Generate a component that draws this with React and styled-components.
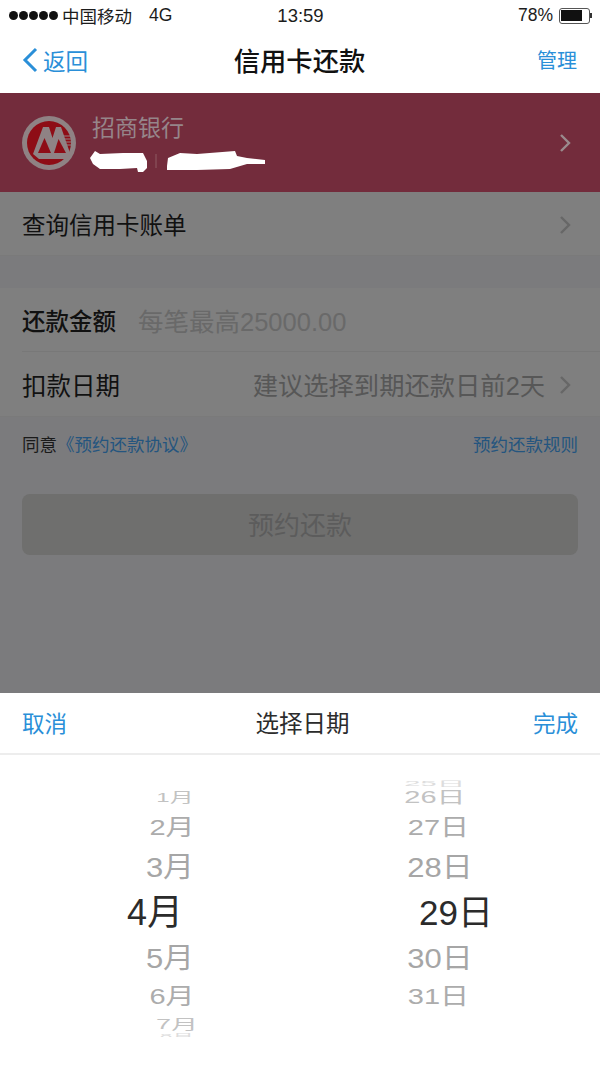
import styled, { createGlobalStyle } from "styled-components";

const months = [
  { label: "1月", size: 24, height: 18, squash: 0.55, color: "#c2c2c2", shift: -10 },
  { label: "2月", size: 29, height: 40, squash: 0.78, color: "#acacac", shift: -4 },
  { label: "3月", size: 31, height: 38, squash: 0.92, color: "#a6a6a6", shift: 0 },
  { label: "4月", size: 36, height: 52, squash: 1, color: "#2b2b2b", shift: 30 },
  { label: "5月", size: 31, height: 40, squash: 0.92, color: "#a6a6a6", shift: 0 },
  { label: "6月", size: 29, height: 38, squash: 0.78, color: "#acacac", shift: -4 },
  { label: "7月", size: 27, height: 20, squash: 0.52, color: "#c2c2c2", shift: -14 },
  { label: "8月", size: 22, height: 4, squash: 0.25, color: "#dddddd", shift: -14 },
];

const days = [
  { label: "25日", size: 29, height: 8, squash: 0.25, color: "#dddddd", shift: 10 },
  { label: "26日", size: 29, height: 18, squash: 0.55, color: "#c2c2c2", shift: 10 },
  { label: "27日", size: 29, height: 40, squash: 0.78, color: "#acacac", shift: 3 },
  { label: "28日", size: 31, height: 38, squash: 0.92, color: "#a6a6a6", shift: 0 },
  { label: "29日", size: 35, height: 52, squash: 1, color: "#2b2b2b", shift: -32 },
  { label: "30日", size: 31, height: 40, squash: 0.92, color: "#a6a6a6", shift: 0 },
  { label: "31日", size: 29, height: 38, squash: 0.78, color: "#acacac", shift: 3 },
];

function Chevron({ color, drop = 0 }) {
  return (
    <ChevronIcon $drop={drop} width="14" height="20" viewBox="0 0 14 20" fill="none">
      <path d="M3 2l8 8-8 8" stroke={color} strokeWidth="2.400" />
    </ChevronIcon>
  );
}

function BankLogo() {
  return (
    <svg width="56" height="56" viewBox="0 0 56 56">
      <circle cx="28" cy="28" r="27" fill="#8f8284" />
      <circle cx="28" cy="28" r="22" fill="#8e0d16" />
      <path d="M12 39L22 12H28L31.500 23 35 12H40L49 38 46 44H18z" fill="#8f8284" />
      <path d="M17 38L23.500 23 30 38z" fill="#8e0d16" />
      <path d="M33 38L37.500 24 45 38z" fill="#8e0d16" />
      <path d="M42 21h8M43 24h8M44 27h7M45 30h6" stroke="#8f8284" strokeWidth="1.200" />
    </svg>
  );
}

function Redaction() {
  return (
    <RedactionIcon width="180" height="24" viewBox="0 0 180 24">
      <path
        d="M2 9L7 2 12 5 35 4 55 4 59 12 59 19 55 23 50 23 49 19 32 20 12 20 5 15z"
        fill="#fff"
      />
      <path d="M68 5v14" stroke="#8f5a62" strokeWidth="1" />
      <path
        d="M79 17L80 9 92 4 109 5 147 2 149 7 159 9 177 11 177 15 159 15 142 20 109 21 79 21z"
        fill="#fff"
      />
    </RedactionIcon>
  );
}

function WheelColumn({ items, top, width }) {
  return (
    <Wheel $width={width} $top={top}>
      {items.map((item) => (
        <WheelItem
          key={item.label}
          $size={item.size}
          $height={item.height}
          $squash={item.squash}
          $color={item.color}
          $shift={item.shift}
        >
          <span>{item.label}</span>
        </WheelItem>
      ))}
    </Wheel>
  );
}

function App() {
  return (
    <Screen>
      <GlobalStyle />
      <StatusBar>
        <Carrier>
          <Signal>
            <i />
            <i />
            <i />
            <i />
            <i />
          </Signal>
          中国移动
          <Network>4G</Network>
        </Carrier>
        <Clock>13:59</Clock>
        <BatteryWrap>
          78%
          <Battery>
            <BatteryFill />
          </Battery>
          <BatteryTip />
        </BatteryWrap>
      </StatusBar>
      <NavBar>
        <BackLink>
          <svg width="16" height="26" viewBox="0 0 16 26" fill="none">
            <path d="M14 2L3 13l11 11" stroke="#2a8fd8" strokeWidth="3" />
          </svg>
          返回
        </BackLink>
        <NavTitle>信用卡还款</NavTitle>
        <NavAction>管理</NavAction>
      </NavBar>
      <Dimmed>
        <BankBanner>
          <BankLeft>
            <BankLogo />
            <BankInfo>
              <BankName>招商银行</BankName>
              <Redaction />
            </BankInfo>
          </BankLeft>
          <Chevron color="#9a8a8d" />
        </BankBanner>
        <RowGroup>
          <Row $height={64}>
            <RowLabel>查询信用卡账单</RowLabel>
            <Chevron color="#676767" drop={3} />
          </Row>
        </RowGroup>
        <Gap />
        <RowGroup>
          <InsetRow $height={64}>
            <RowLabel $strong>还款金额</RowLabel>
            <Placeholder>每笔最高25000.00</Placeholder>
          </InsetRow>
          <Row $height={65}>
            <RowLabel $wide>扣款日期</RowLabel>
            <RowValue>
              <HintText>建议选择到期还款日前2天</HintText>
              <Chevron color="#676767" drop={1} />
            </RowValue>
          </Row>
        </RowGroup>
        <AgreementRow>
          <span>
            同意
            <DimLink>《预约还款协议》</DimLink>
          </span>
          <DimLink>预约还款规则</DimLink>
        </AgreementRow>
        <SubmitButton>预约还款</SubmitButton>
      </Dimmed>
      <Sheet>
        <SheetHeader>
          <SheetAction>取消</SheetAction>
          <SheetTitle>选择日期</SheetTitle>
          <SheetAction>完成</SheetAction>
        </SheetHeader>
        <Wheels>
          <WheelColumn items={months} top={8} width={110} />
          <WheelColumn items={days} top={0} width={110} />
        </Wheels>
      </Sheet>
    </Screen>
  );
}

export default App;

const GlobalStyle = createGlobalStyle`
  html, body {
    margin: 0;
    padding: 0;
    background: #fff;
  }
  * {
    box-sizing: border-box;
  }
`;

const Screen = styled.div`
  width: 600px;
  height: 1067px;
  overflow: hidden;
  display: flex;
  flex-direction: column;
  font-family: "Liberation Sans", "Noto Sans CJK SC", sans-serif;
`;

const StatusBar = styled.div`
  height: 33px;
  padding: 0 8px 2px 9px;
  display: flex;
  align-items: center;
  justify-content: space-between;
  font-size: 17.500px;
  color: #1c1c1c;
`;

const Carrier = styled.div`
  width: 200px;
  display: flex;
  align-items: center;
`;

const Signal = styled.div`
  display: flex;
  gap: 1px;
  margin-right: 4px;

  i {
    width: 9px;
    height: 9px;
    border-radius: 50%;
    background: #111;
  }
`;

const Network = styled.span`
  margin-left: 17px;
`;

const Clock = styled.div`
  font-size: 18.500px;
`;

const BatteryWrap = styled.div`
  width: 200px;
  display: flex;
  align-items: center;
  justify-content: flex-end;
`;

const Battery = styled.div`
  width: 31px;
  height: 16px;
  margin-left: 6px;
  padding: 1.500px;
  border: 1px solid #555;
  border-radius: 3px;
`;

const BatteryFill = styled.div`
  width: 80%;
  height: 100%;
  background: #111;
`;

const BatteryTip = styled.div`
  width: 2px;
  height: 5px;
  background: #333;
`;

const NavBar = styled.div`
  height: 60px;
  padding: 0 23px 7px 22px;
  display: flex;
  align-items: center;
  justify-content: space-between;
`;

const BackLink = styled.div`
  width: 120px;
  display: flex;
  align-items: center;
  gap: 5px;
  font-size: 22.500px;
  color: #2a8fd8;
`;

const NavTitle = styled.div`
  font-size: 26.300px;
  font-weight: 500;
  color: #111;
`;

const NavAction = styled.div`
  width: 120px;
  text-align: right;
  font-size: 20px;
  color: #2a8fd8;
`;

const Dimmed = styled.div`
  height: 600px;
  background: #7b7b7d;
`;

const BankBanner = styled.div`
  height: 99px;
  padding: 0 28px 0 21px;
  display: flex;
  align-items: center;
  justify-content: space-between;
  background: #732c3c;
`;

const BankLeft = styled.div`
  display: flex;
  align-items: center;
  gap: 15px;
`;

const BankInfo = styled.div`
  display: flex;
  flex-direction: column;
  gap: 6px;
`;

const BankName = styled.div`
  font-size: 23px;
  line-height: 30px;
  color: #96858a;
`;

const RedactionIcon = styled.svg`
  margin-left: -4px;
`;

const ChevronIcon = styled.svg`
  margin-top: ${(p) => p.$drop}px;
`;

const RowGroup = styled.div`
  background: #7f7f7f;
`;

const Row = styled.div`
  height: ${(p) => p.$height}px;
  padding: 0 28px 0 22px;
  display: flex;
  align-items: center;
  justify-content: space-between;
  border-bottom: 1px solid #7a7a7a;
`;

const InsetRow = styled.div`
  height: ${(p) => p.$height}px;
  margin-left: 22px;
  display: flex;
  align-items: center;
  gap: 22px;
  border-bottom: 1px solid #787878;
`;

const RowLabel = styled.div`
  font-size: ${(p) => (p.$wide ? 24.500 : 23.500)}px;
  font-weight: ${(p) => (p.$strong ? 500 : 400)};
  color: #111;
`;

const Placeholder = styled.div`
  font-size: 25.500px;
  color: #696969;
`;

const RowValue = styled.div`
  display: flex;
  align-items: center;
  gap: 13px;
`;

const HintText = styled.div`
  font-size: 25.300px;
  color: #575757;
`;

const Gap = styled.div`
  height: 32px;
`;

const AgreementRow = styled.div`
  height: 56px;
  padding: 0 22px 3px;
  display: flex;
  align-items: center;
  justify-content: space-between;
  font-size: 17.500px;
  color: #1a1a1a;
`;

const DimLink = styled.span`
  color: #24557f;
`;

const SubmitButton = styled.div`
  height: 61px;
  margin: 21px 22px 0;
  padding-bottom: 3px;
  display: flex;
  align-items: center;
  justify-content: center;
  border-radius: 8px;
  background: #6f6f6e;
  font-size: 26px;
  color: #5c5c5c;
`;

const Sheet = styled.div`
  flex: 1;
  background: #fff;
`;

const SheetHeader = styled.div`
  height: 62px;
  padding: 0 22px 2px;
  display: flex;
  align-items: center;
  justify-content: space-between;
  border-bottom: 2px solid #ededed;
`;

const SheetAction = styled.div`
  font-size: 22.500px;
  color: #2a8fd8;
`;

const SheetTitle = styled.div`
  padding-left: 5px;
  font-size: 23.500px;
  color: #2b2b2b;
`;

const Wheels = styled.div`
  padding: 24px 105px 0 115px;
  display: flex;
  justify-content: space-between;
`;

const Wheel = styled.div`
  width: ${(p) => p.$width}px;
  margin-top: ${(p) => p.$top}px;
  display: flex;
  flex-direction: column;
`;

const WheelItem = styled.div`
  height: ${(p) => p.$height}px;
  margin: 0 -40px;
  padding-right: ${(p) => Math.max(p.$shift, 0)}px;
  padding-left: ${(p) => Math.max(-p.$shift, 0)}px;
  display: flex;
  align-items: center;
  justify-content: center;
  overflow: hidden;
  font-size: ${(p) => p.$size}px;
  color: ${(p) => p.$color};

  span {
    white-space: nowrap;
    transform: scaleY(${(p) => p.$squash});
  }
`;
